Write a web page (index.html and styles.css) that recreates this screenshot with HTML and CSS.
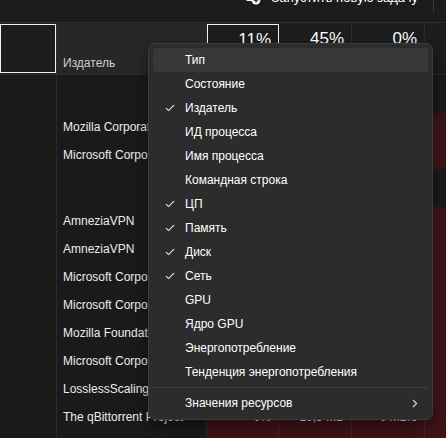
FILE: index.html
```html
<!DOCTYPE html>
<html lang="ru">
<head>
<meta charset="utf-8">
<link rel="stylesheet" href="styles.css">
</head>
<body>
<div class="app">
  <div class="topbar">
    <div class="run-btn">
      <svg class="run-ico" width="16" height="16" viewBox="0 0 16 16"><rect x="1.5" y="1.5" width="10" height="10" rx="1.5" fill="none" stroke="#fff" stroke-width="1.2"/><circle cx="11" cy="11" r="4.5" fill="#fff"/><path d="M11 8.6v4.8M8.6 11h4.8" stroke="#1e1e1e" stroke-width="1.3"/></svg>
      <span>Запустить новую задачу</span>
    </div>
    <div class="tb-sep"></div>
  </div>

  <div class="table">
    <div class="hdr">
      <div class="hc hc-name"><div class="focus-box"></div></div>
      <div class="hc hc-pub">Издатель</div>
      <div class="hc hc-num hc-focus">11%</div>
      <div class="hc hc-num">45%</div>
      <div class="hc hc-num">0%</div>
      <div class="hc hc-num">0%</div>
    </div>

    <div class="group"><div class="c c-name"></div><div class="c c-pub"></div><div class="c"></div><div class="c"></div><div class="c"></div><div class="c"></div></div>
    <div class="row"><div class="c c-name"></div><div class="c c-pub">Mozilla Corporation</div><div class="c v">0,4%</div><div class="c v">512,3 МБ</div><div class="c v">0,1 МБ/с</div><div class="c v">0 Мбит/с</div></div>
    <div class="row"><div class="c c-name"></div><div class="c c-pub">Microsoft Corporation</div><div class="c v">0,2%</div><div class="c v">35,8 МБ</div><div class="c v">0 МБ/с</div><div class="c v">0 Мбит/с</div></div>

    <div class="group"><div class="c c-name"></div><div class="c c-pub"></div><div class="c"></div><div class="c"></div><div class="c"></div><div class="c"></div></div>
    <div class="row"><div class="c c-name"></div><div class="c c-pub">AmneziaVPN</div><div class="c v">0%</div><div class="c v">14,2 МБ</div><div class="c v">0 МБ/с</div><div class="c v">0 Мбит/с</div></div>
    <div class="row"><div class="c c-name"></div><div class="c c-pub">AmneziaVPN</div><div class="c v">0%</div><div class="c v">22,6 МБ</div><div class="c v">0 МБ/с</div><div class="c v">0,1 Мбит/с</div></div>
    <div class="row"><div class="c c-name"></div><div class="c c-pub">Microsoft Corporation</div><div class="c v">0%</div><div class="c v">5,1 МБ</div><div class="c v">0 МБ/с</div><div class="c v">0 Мбит/с</div></div>
    <div class="row"><div class="c c-name"></div><div class="c c-pub">Microsoft Corporation</div><div class="c v">0%</div><div class="c v">8,7 МБ</div><div class="c v">0 МБ/с</div><div class="c v">0 Мбит/с</div></div>
    <div class="row"><div class="c c-name"></div><div class="c c-pub">Mozilla Foundation</div><div class="c v">0%</div><div class="c v">3,9 МБ</div><div class="c v">0 МБ/с</div><div class="c v">0 Мбит/с</div></div>
    <div class="row"><div class="c c-name"></div><div class="c c-pub">Microsoft Corporation</div><div class="c v">0%</div><div class="c v">2,4 МБ</div><div class="c v">0 МБ/с</div><div class="c v">0 Мбит/с</div></div>
    <div class="row"><div class="c c-name"></div><div class="c c-pub">LosslessScaling</div><div class="c v">0%</div><div class="c v">41,0 МБ</div><div class="c v">0 МБ/с</div><div class="c v">0 Мбит/с</div></div>
    <div class="row"><div class="c c-name"></div><div class="c c-pub">The qBittorrent Project</div><div class="c v">0%</div><div class="c v">10,5 МБ</div><div class="c v">0 МБ/с</div><div class="c v">0,1 Мбит/с</div></div>
    <div class="row"><div class="c c-name"></div><div class="c c-pub">Microsoft Corporation</div><div class="c v">0%</div><div class="c v">1,2 МБ</div><div class="c v">0 МБ/с</div><div class="c v">0 Мбит/с</div></div>
  </div>

  <div class="menu">
    <div class="mi hover"><span class="chk"></span><span class="lbl">Тип</span></div>
    <div class="mi"><span class="chk"></span><span class="lbl">Состояние</span></div>
    <div class="mi"><span class="chk"><svg width="10" height="8" viewBox="0 0 10 8"><path d="M1 4.2L3.6 6.6L9 1.2" fill="none" stroke="#e8eef5" stroke-width="1.1"/></svg></span><span class="lbl">Издатель</span></div>
    <div class="mi"><span class="chk"></span><span class="lbl">ИД процесса</span></div>
    <div class="mi"><span class="chk"></span><span class="lbl">Имя процесса</span></div>
    <div class="mi"><span class="chk"></span><span class="lbl">Командная строка</span></div>
    <div class="mi"><span class="chk"><svg width="10" height="8" viewBox="0 0 10 8"><path d="M1 4.2L3.6 6.6L9 1.2" fill="none" stroke="#e8eef5" stroke-width="1.1"/></svg></span><span class="lbl">ЦП</span></div>
    <div class="mi"><span class="chk"><svg width="10" height="8" viewBox="0 0 10 8"><path d="M1 4.2L3.6 6.6L9 1.2" fill="none" stroke="#e8eef5" stroke-width="1.1"/></svg></span><span class="lbl">Память</span></div>
    <div class="mi"><span class="chk"><svg width="10" height="8" viewBox="0 0 10 8"><path d="M1 4.2L3.6 6.6L9 1.2" fill="none" stroke="#e8eef5" stroke-width="1.1"/></svg></span><span class="lbl">Диск</span></div>
    <div class="mi"><span class="chk"><svg width="10" height="8" viewBox="0 0 10 8"><path d="M1 4.2L3.6 6.6L9 1.2" fill="none" stroke="#e8eef5" stroke-width="1.1"/></svg></span><span class="lbl">Сеть</span></div>
    <div class="mi"><span class="chk"></span><span class="lbl">GPU</span></div>
    <div class="mi"><span class="chk"></span><span class="lbl">Ядро GPU</span></div>
    <div class="mi"><span class="chk"></span><span class="lbl">Энергопотребление</span></div>
    <div class="mi"><span class="chk"></span><span class="lbl">Тенденция энергопотребления</span></div>
    <div class="msep"></div>
    <div class="mi"><span class="chk"></span><span class="lbl">Значения ресурсов</span><svg class="chev" width="6" height="9" viewBox="0 0 6 9"><path d="M1 1L4.6 4.5L1 8" fill="none" stroke="#dcdcdc" stroke-width="1.1"/></svg></div>
  </div>
</div>
</body>
</html>
```

FILE: styles.css
```css
* { box-sizing: border-box; }
html, body { margin: 0; padding: 0; }
body {
  background: #1a1a1a;
  font-family: "Liberation Sans", Arial, sans-serif;
  color: #ffffff;
  width: 446px;
  height: 438px;
  overflow: hidden;
}
.app { position: relative; width: 446px; height: 438px; overflow: hidden; }

.topbar {
  height: 23px;
  background: #1c1c1c;
  border-bottom: 1px solid #2e2e2e;
  display: flex;
  align-items: flex-start;
  justify-content: flex-end;
  padding-right: 12px;
}
.run-btn {
  display: flex;
  align-items: center;
  gap: 11px;
  margin-top: -11px;
  height: 16px;
  font-size: 13px;
  color: #ffffff;
  margin-right: 15px;
}
.run-ico { flex: none; }
.tb-sep { width: 1px; height: 12px; background: #3a3a3a; }

.table { width: 530px; }
.hdr, .row, .group {
  display: grid;
  grid-template-columns: 57px 150px 72px 73px 73px 105px;
}
.hdr {
  height: 52px;
  border-bottom: 1px solid #2c2c2c;
  background: #1d1d1d;
}
.hc {
  border-right: 1px solid #2c2c2c;
  font-size: 12px;
  color: #d0d0d0;
}
.hc-name { padding: 1px 0 1px 0; }
.focus-box { width: 56px; height: 49px; border: 1px solid #f2f2f2; }
.hc-pub {
  background: #272727;
  display: flex;
  align-items: flex-end;
  padding: 0 0 4px 6px;
}
.hc-num {
  text-align: right;
  font-size: 17px;
  color: #ffffff;
  padding: 6px 7px 0 0;
}
.hc-focus { border: 1px solid #f2f2f2; margin-top: 1px; padding-top: 5px; }

.group { height: 38px; }
.row { height: 28px; }
.c {
  border-right: 1px solid #2a2a2a;
  font-size: 12px;
  line-height: 28px;
  white-space: nowrap;
  overflow: hidden;
  color: #ececec;
}
.c-pub { padding-left: 6px; }
.row .v {
  background: #3e1418;
  border-right-color: #4c2428;
  text-align: right;
  padding-right: 7px;
}

.menu {
  position: absolute;
  left: 148px;
  top: 43px;
  width: 285px;
  height: 377px;
  background: #2c2c2c;
  border: 1px solid #3c3c3c;
  border-radius: 7px;
  box-shadow: 0 6px 16px rgba(0,0,0,0.45);
  padding: 4px 4px;
}
.mi {
  height: 24px;
  display: flex;
  align-items: center;
  border-radius: 4px;
  font-size: 12px;
  color: #ffffff;
}
.mi.hover { background: #383838; }
.chk {
  width: 32px;
  flex: none;
  display: flex;
  justify-content: center;
  padding-left: 2px;
}
.chk svg { display: block; }
.lbl { flex: 1; }
.chev { margin-right: 10px; }
.msep { height: 1px; background: #3e3e3e; margin: 3px 0 3px 0; }
```
